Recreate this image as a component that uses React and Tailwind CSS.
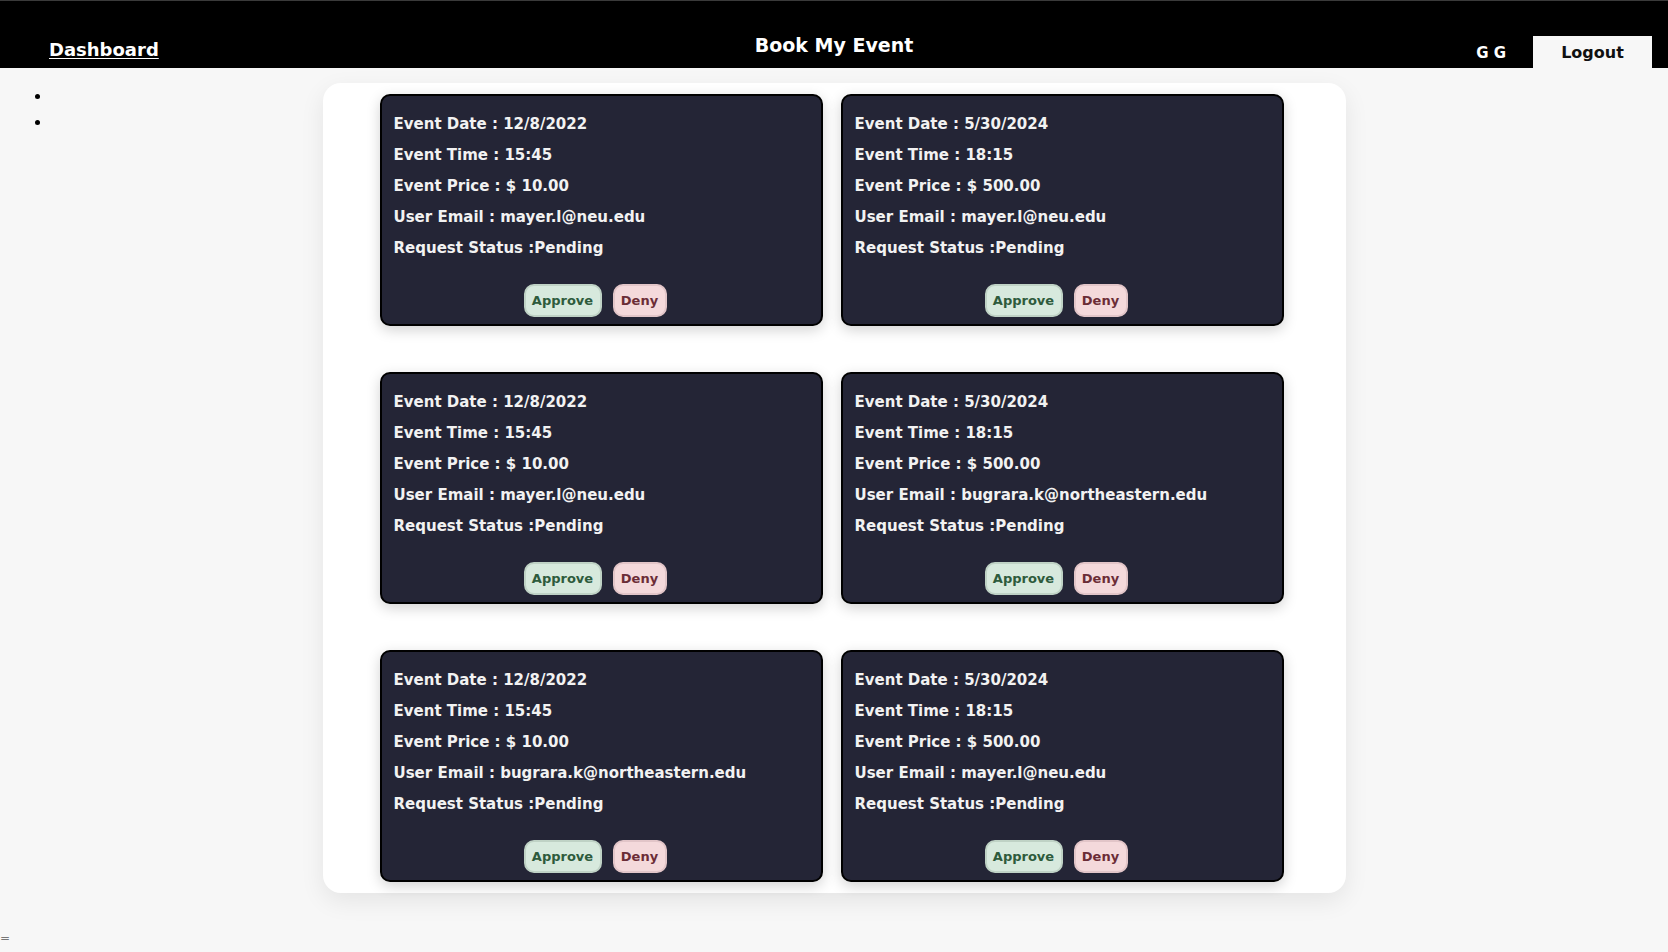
import React from "react";

const cards = [
  { date: "12/8/2022", time: "15:45", price: "$ 10.00", email: "mayer.l@neu.edu" },
  { date: "5/30/2024", time: "18:15", price: "$ 500.00", email: "mayer.l@neu.edu" },
  { date: "12/8/2022", time: "15:45", price: "$ 10.00", email: "mayer.l@neu.edu" },
  { date: "5/30/2024", time: "18:15", price: "$ 500.00", email: "bugrara.k@northeastern.edu" },
  { date: "12/8/2022", time: "15:45", price: "$ 10.00", email: "bugrara.k@northeastern.edu" },
  { date: "5/30/2024", time: "18:15", price: "$ 500.00", email: "mayer.l@neu.edu" },
];

function Card({ c }) {
  return (
    <div className="h-[232px] rounded-[10px] border-2 border-black bg-[#242536] shadow-[0_4px_14px_rgba(0,0,0,0.18)] px-[12px] pt-[13px] text-[#f2f2f2]">
      <div className="text-[15px] font-bold leading-[31px]">
        <div>Event Date : {c.date}</div>
        <div>Event Time : {c.time}</div>
        <div>Event Price : {c.price}</div>
        <div>User Email : {c.email}</div>
        <div>Request Status :Pending</div>
      </div>
      <div className="mt-[20px] flex justify-center gap-[11px] pr-[12px]">
        <button className="h-[33px] w-[78px] rounded-[10px] border-2 border-[#bfd2c5] bg-[#d7e9dd] text-[13px] font-bold text-[#2e5b3c]">
          Approve
        </button>
        <button className="h-[33px] w-[54px] rounded-[10px] border-2 border-[#e2c5c8] bg-[#f4d9db] text-[13px] font-bold text-[#6b2c36]">
          Deny
        </button>
      </div>
    </div>
  );
}

export default function App() {
  return (
    <div
      className="min-h-[952px] bg-[#f7f7f7]"
      style={{ fontFamily: '"DejaVu Sans", Verdana, sans-serif' }}
    >
      <header className="grid h-[68px] grid-cols-3 border-t border-[#3a3a3a] bg-black text-white">
        <div className="flex items-end pl-[49px] pb-[6px]">
          <a href="#" className="text-[18px] font-bold leading-[24px] underline underline-offset-2">
            Dashboard
          </a>
        </div>
        <div className="flex justify-center pt-[30px]">
          <h1 className="text-[19px] font-bold leading-[28px]">Book My Event</h1>
        </div>
        <div className="flex items-end justify-end pr-[16px]">
          <span className="mb-[5px] mr-[27px] text-[15px] font-bold leading-[20px]">G G</span>
          <button className="h-[32px] w-[119px] bg-[#f7f7f7] pt-[2px] text-[16px] font-bold text-[#111]">
            Logout
          </button>
        </div>
      </header>

      <main className="grid grid-cols-[1fr_1023px_1fr] pt-[15px]">
        <ul className="list-disc pl-[51px] text-[15px] leading-[26px] text-black">
          <li>&nbsp;</li>
          <li>&nbsp;</li>
        </ul>
        <div className="rounded-[18px] bg-white py-[11px] pl-[57px] shadow-[0_8px_24px_rgba(0,0,0,0.08)]">
          <div className="grid grid-cols-[443px_443px] gap-x-[18px] gap-y-[46px]">
            {cards.map((c, i) => (
              <Card key={i} c={c} />
            ))}
          </div>
        </div>
        <div />
      </main>

      <div className="mt-[38px] text-[12px] leading-[14px] text-[#777]">=</div>
    </div>
  );
}
